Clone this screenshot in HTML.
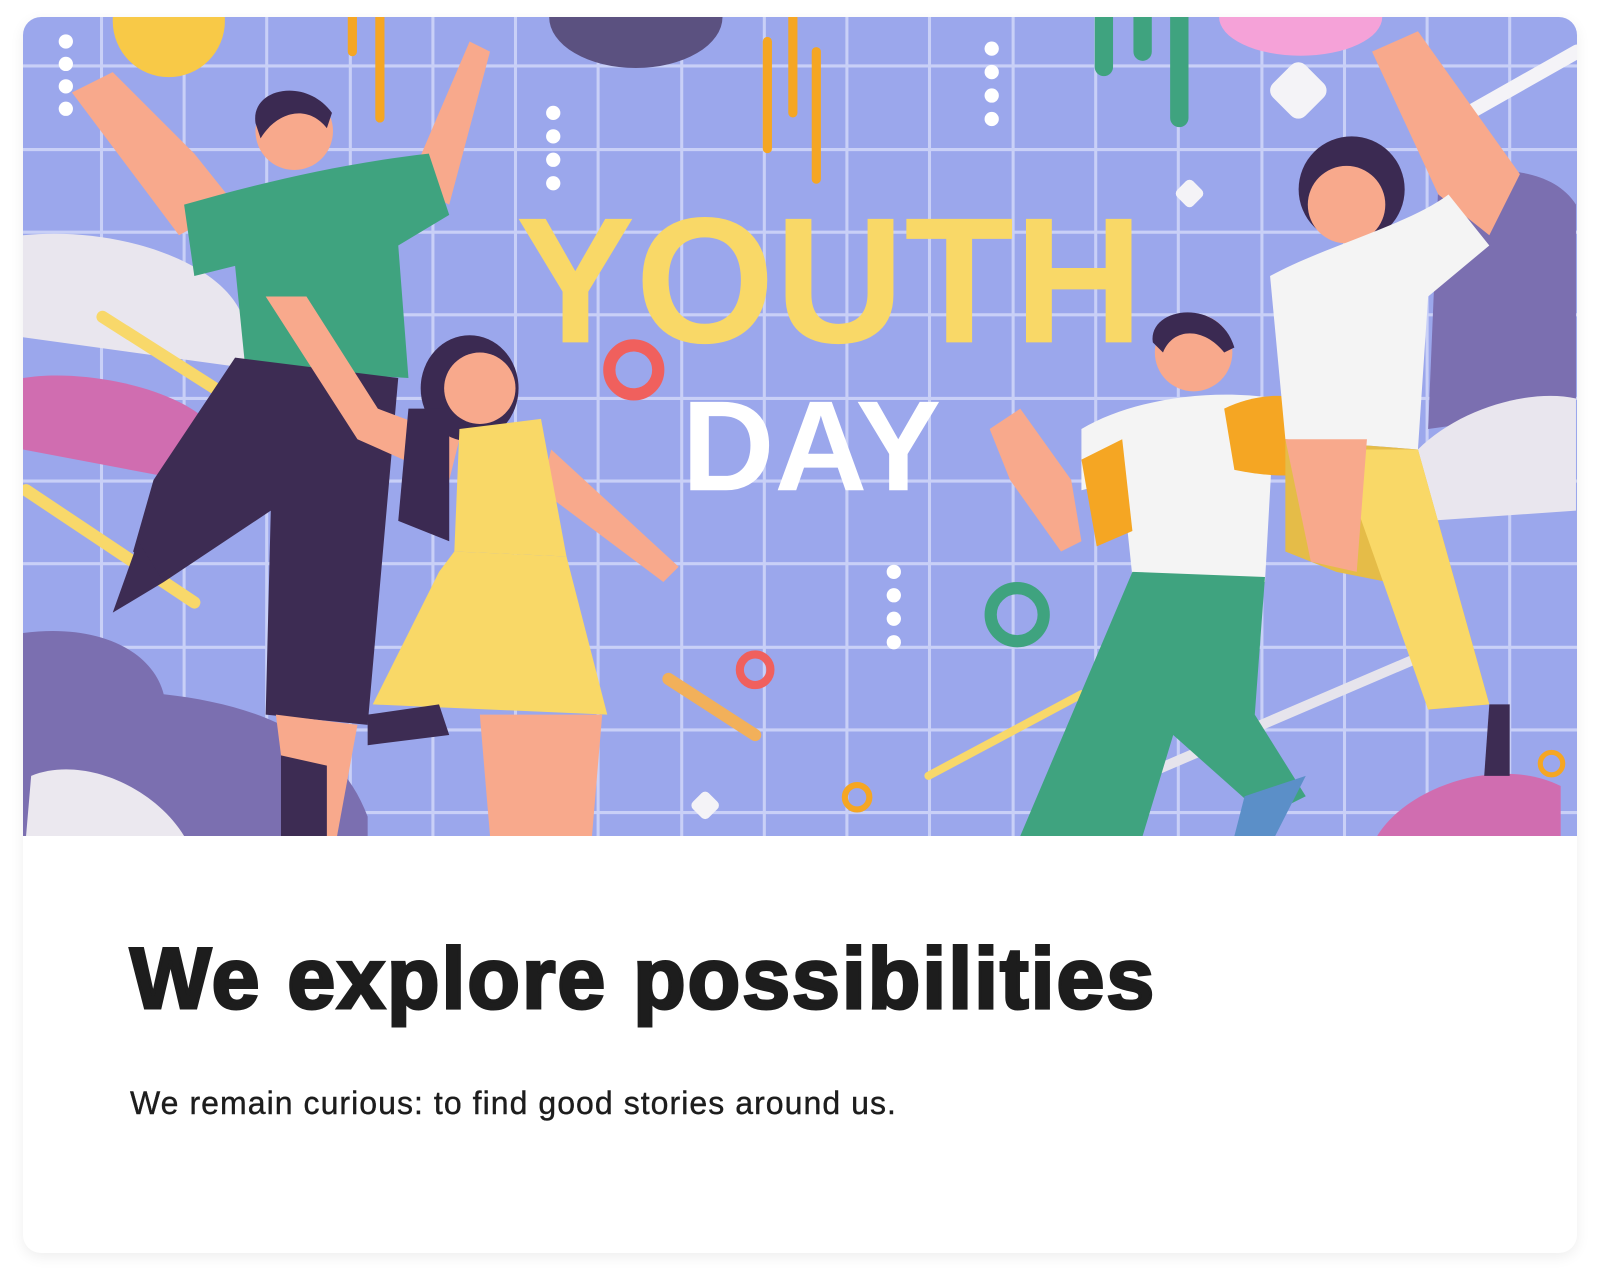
<!DOCTYPE html>
<html><head><meta charset="utf-8"><style>
html,body{margin:0;padding:0;background:#fff;width:1600px;height:1281px;overflow:hidden}
.card{position:absolute;left:23px;top:17px;width:1554px;height:1236px;background:#fff;border-radius:18px;box-shadow:0 4px 14px rgba(0,0,0,.07);overflow:hidden}
svg{position:absolute;left:0;top:0}
h1{position:absolute;left:107px;top:919px;margin:0;font:bold 86px/1 "Liberation Sans",Arial,sans-serif;color:#1d1d1d;letter-spacing:2px;-webkit-text-stroke:3px #1d1d1d}
p{position:absolute;left:107px;top:1070px;margin:0;font:32px/1 "Liberation Sans",Arial,sans-serif;color:#1d1d1d;letter-spacing:1.05px;-webkit-text-stroke:0.4px #1d1d1d}
</style></head><body>
<div class="card">
<svg width="1554" height="819" viewBox="22 16 1524 803" preserveAspectRatio="none">
<rect x="22" y="16" width="1524" height="803" fill="#9ba7ec"/>
<g stroke="#c9d0f7" stroke-width="3">
<path d="M99 16V819M180 16V819M261 16V819M343 16V819M424 16V819M505 16V819M586 16V819M668 16V819M749 16V819M830 16V819M911 16V819M993 16V819M1074 16V819M1155 16V819M1237 16V819M1318 16V819M1399 16V819M1480 16V819"/>
<path d="M22 64H1546M22 146H1546M22 227H1546M22 308H1546M22 390H1546M22 471H1546M22 552H1546M22 634H1546M22 715H1546M22 796H1546"/>
</g>
<circle cx="165" cy="20" r="55" fill="#f8c947"/>
<ellipse cx="623" cy="16" rx="85" ry="50" fill="#5b5180"/>
<ellipse cx="1275" cy="16" rx="80" ry="38" fill="#f5a2d8"/>
<path d="M22 230C120 220 230 260 240 320L240 360L22 330Z" fill="#e9e6ee"/>
<path d="M22 370C80 360 180 380 210 420L180 470L22 440Z" fill="#d06db0"/>
<path d="M22 620C100 610 150 640 160 680C250 690 330 720 360 800L360 819H22Z" fill="#7b6fb0"/>
<path d="M30 760C80 740 150 770 180 819H25Z" fill="#ebe8ef"/>
<path d="M1410 180C1450 160 1520 160 1545 200V400L1400 420Z" fill="#7b6fb0"/>
<path d="M1390 440C1430 400 1500 380 1545 390V500L1400 510Z" fill="#e9e6ee"/>
<path d="M1350 819C1380 770 1470 740 1530 770V819Z" fill="#d06db0"/>
<path d="M1440 110L1546 50" stroke="#f4f3f7" stroke-width="14" stroke-linecap="round"/>
<path d="M1120 760L1400 640" stroke="#e6e4ec" stroke-width="10"/>
<path d="M910 760L1060 680" stroke="#f8d86a" stroke-width="8" stroke-linecap="round"/>
<path d="M100 310L210 380M25 480L190 590" stroke="#f8d86a" stroke-width="12" stroke-linecap="round"/>
<path d="M655 665L740 720" stroke="#f2b05a" stroke-width="12" stroke-linecap="round"/>
<path d="M345 16V50M372 16V115M752 40V145M777 16V110M800 50V175" stroke="#f5a623" stroke-width="9" stroke-linecap="round"/>
<path d="M1082 16V65M1120 16V50M1156 16V115" stroke="#3fa37f" stroke-width="18" stroke-linecap="round"/>
<g fill="#fff"><circle cx="64" cy="40" r="7"/><circle cx="64" cy="62" r="7"/><circle cx="64" cy="84" r="7"/><circle cx="64" cy="106" r="7"/>
<circle cx="542" cy="110" r="7"/><circle cx="542" cy="133" r="7"/><circle cx="542" cy="156" r="7"/><circle cx="542" cy="179" r="7"/>
<circle cx="972" cy="47" r="7"/><circle cx="972" cy="70" r="7"/><circle cx="972" cy="93" r="7"/><circle cx="972" cy="116" r="7"/>
<circle cx="876" cy="560" r="7"/><circle cx="876" cy="583" r="7"/><circle cx="876" cy="606" r="7"/><circle cx="876" cy="629" r="7"/></g>
<g fill="#f4f3f7"><rect x="1250" y="65" width="45" height="45" rx="10" transform="rotate(45 1272 88)"/><rect x="1155" y="178" width="22" height="22" rx="5" transform="rotate(45 1166 189)"/><rect x="680" y="778" width="22" height="22" rx="5" transform="rotate(45 691 789)"/></g>
<circle cx="621" cy="362" r="24" fill="none" stroke="#f0605d" stroke-width="12"/>
<circle cx="740" cy="656" r="15" fill="none" stroke="#f0605d" stroke-width="8"/>
<circle cx="997" cy="602" r="26" fill="none" stroke="#3fa37f" stroke-width="12"/>
<circle cx="840" cy="781" r="12" fill="none" stroke="#f5a623" stroke-width="6"/>
<circle cx="1521" cy="748" r="11" fill="none" stroke="#f5a623" stroke-width="5"/>
<text x="505" y="335" font-family="Liberation Sans,Arial,sans-serif" font-weight="bold" font-size="176" fill="#f9d867">YOUTH</text>
<text x="668" y="480" font-family="Liberation Sans,Arial,sans-serif" font-weight="bold" font-size="126" fill="#fff">DAY</text>
<path d="M70 90L175 230L230 200L190 150L110 70Z" fill="#f8a98c"/>
<path d="M400 180L460 40L480 50L440 200Z" fill="#f8a98c"/>
<path d="M180 200C250 180 330 160 420 150L440 210L390 240L400 370L240 360L230 260L190 270Z" fill="#3fa37f"/>
<circle cx="288" cy="128" r="38" fill="#f8a98c"/><path d="M250 120C245 85 300 75 325 110L320 125C300 100 270 110 255 135Z" fill="#3b2a52"/>
<path d="M230 350L390 370L360 710L260 700L265 500L160 570L130 540L150 470Z" fill="#3d2c53"/>
<path d="M270 700L350 710L330 819L285 819Z" fill="#f8a98c"/>
<path d="M275 740L320 750L320 819L275 819Z" fill="#3d2c53"/>
<path d="M110 600L135 530L160 570Z" fill="#3d2c53"/>
<path d="M260 290L300 290L370 400L450 430L440 470L350 430Z" fill="#f8a98c"/>
<path d="M540 440L665 555L650 570L530 480Z" fill="#f8a98c"/>
<ellipse cx="460" cy="380" rx="48" ry="52" fill="#3b2a52"/><circle cx="470" cy="380" r="35" fill="#f8a98c"/>
<path d="M400 400L440 400L440 530L390 510Z" fill="#3b2a52"/>
<path d="M450 420L530 410L555 545L445 540Z" fill="#f9d867"/>
<path d="M445 540L555 545L595 700L365 690L430 560Z" fill="#f9d867"/>
<path d="M470 700L590 700L580 819L480 819Z" fill="#f8a98c"/>
<path d="M360 700L430 690L440 720L360 730Z" fill="#3d2c53"/>
<path d="M970 420L1000 400L1050 470L1060 530L1040 540L990 470Z" fill="#f8a98c"/>
<circle cx="1170" cy="345" r="38" fill="#f8a98c"/><path d="M1130 335C1125 300 1195 290 1210 340L1200 345C1180 320 1150 320 1140 345Z" fill="#3b2a52"/>
<path d="M1060 420C1110 390 1190 380 1250 390L1240 570L1110 565L1100 470L1060 480Z" fill="#f4f4f4"/>
<path d="M1060 450L1100 430L1110 520L1075 535Z" fill="#f5a623"/>
<path d="M1200 400C1240 380 1300 380 1310 430C1310 470 1260 470 1210 460Z" fill="#f5a623"/>
<path d="M1110 560L1240 565L1230 700L1280 780L1240 800L1150 720L1120 819L1000 819Z" fill="#3fa37f"/>
<path d="M1220 780L1280 760L1250 819L1210 819Z" fill="#5b8fc8"/>
<path d="M1345 50L1390 30L1490 170L1460 230L1410 190Z" fill="#f8a98c"/>
<ellipse cx="1325" cy="185" rx="52" ry="52" fill="#3b2a52"/><circle cx="1320" cy="200" r="38" fill="#f8a98c"/>
<path d="M1245 270C1300 240 1380 220 1420 190L1460 240L1400 290L1390 440L1260 430Z" fill="#f4f4f4"/>
<path d="M1260 430L1390 440L1460 690L1400 695L1360 570L1310 560L1260 540Z" fill="#e5bc48"/>
<path d="M1310 440L1390 440L1460 690L1400 695Z" fill="#f9d867"/>
<path d="M1460 690L1480 690L1480 760L1455 760Z" fill="#3d2c53"/>
<path d="M1260 430L1340 430L1330 560L1285 550Z" fill="#f8a98c"/>
</svg>
<h1>We explore possibilities</h1>
<p>We remain curious: to find good stories around us.</p>
</div>
</body></html>
